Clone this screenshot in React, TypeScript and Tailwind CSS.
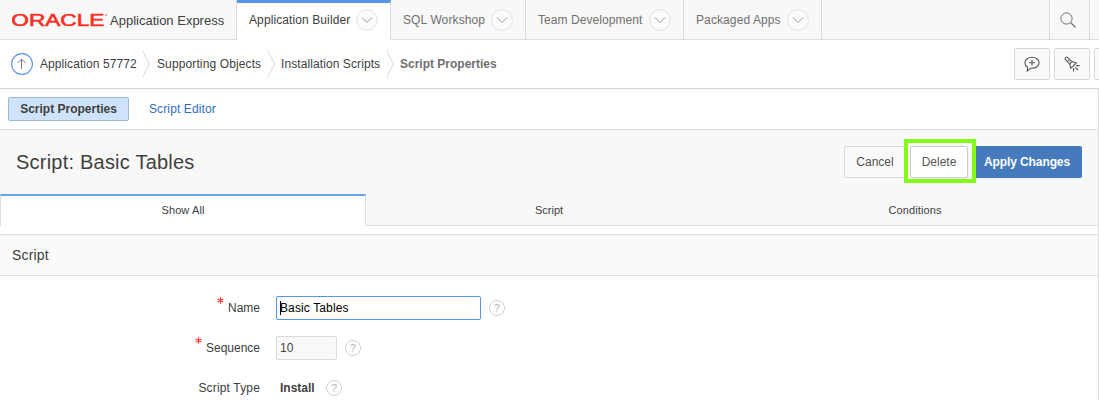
import type { ReactNode } from "react";

function ChevronCircle() {
  return (
    <svg width="22" height="22" viewBox="0 0 22 22" fill="none" className="shrink-0">
      <circle cx="11" cy="11" r="10.4" stroke="#e2e2e2" fill="#fbfbfb" />
      <path d="M6 8.5 L11 13.5 L16 8.5" stroke="#9a9a9a" />
    </svg>
  );
}

function NavTab({ label, width, active, spacing }: { label: string; width: string; active?: boolean; spacing: string }) {
  return (
    <div
      className={`${width} flex h-10 shrink-0 items-center justify-between border-r border-[#dcdcdc] pr-3 pl-3 ${
        active ? "border-t-[3px] border-t-[#5796e6] bg-white pb-[3px] text-[#404040]" : "border-b bg-[#f8f8f8] text-[#707070]"
      }`}
    >
      <span className={`whitespace-nowrap ${spacing}`}>{label}</span>
      <ChevronCircle />
    </div>
  );
}

function CrumbSeparator({ className }: { className: string }) {
  return (
    <svg width="9" height="26" viewBox="0 0 9 26" fill="none" className={`shrink-0 ${className}`}>
      <path d="M1 0.5 L7.5 13 L1 25.5" stroke="#d8d8d8" />
    </svg>
  );
}

function Help({ className }: { className: string }) {
  return (
    <span className={`flex size-4 items-center justify-center rounded-full border border-[#cfcfcf] text-[11px] leading-none text-[#b8b8b8] ${className}`}>
      ?
    </span>
  );
}

function IconButton({ children }: { children: ReactNode }) {
  return (
    <button className="flex h-8 w-9 shrink-0 items-center justify-center rounded-[2px] border border-[#d8d8d8] bg-[#f9f9f9]">
      {children}
    </button>
  );
}

function Label({ text, required, spacing = "" }: { text: string; required?: boolean; spacing?: string }) {
  return (
    <div className="flex w-[260px] shrink-0 justify-end text-[#404040]">
      {required && (
        <svg width="7" height="7" viewBox="0 0 7 7" className="mr-1 -mt-[3px] shrink-0" stroke="#ff3b30" strokeWidth="1.2">
          <path d="M3.5 0.3V6.7M0.7 1.9L6.3 5.1M6.3 1.9L0.7 5.1" />
        </svg>
      )}
      <span className={`whitespace-nowrap ${spacing}`}>{text}</span>
    </div>
  );
}

export default function App() {
  return (
    <div className="h-[400px] w-[1099px] overflow-hidden bg-white font-['Liberation_Sans',Arial,sans-serif] text-[12px] leading-4 text-[#404040]">
      <header className="flex h-10">
        <div className="flex h-10 w-[237px] shrink-0 items-center border-r border-b border-[#dcdcdc] bg-[#f8f8f8] pl-3">
          <svg width="96" height="16" viewBox="0 0 96 16" className="shrink-0">
            <text x="-0.7" y="14" fontSize="16.5" fill="#f8301f" stroke="#f8301f" strokeWidth="0.6" textLength="93" lengthAdjust="spacingAndGlyphs">
              ORACLE
            </text>
            <circle cx="94.2" cy="3" r="0.8" fill="#f8301f" />
          </svg>
          <span className="ml-0.5 pt-0.5 text-[13px] whitespace-nowrap">Application Express</span>
        </div>
        <NavTab label="Application Builder" width="w-[154px]" active spacing="tracking-[0.1px]" />
        <NavTab label="SQL Workshop" width="w-[135px]" spacing="tracking-[0.12px]" />
        <NavTab label="Team Development" width="w-[158px]" spacing="tracking-[0.06px]" />
        <NavTab label="Packaged Apps" width="w-[138px]" spacing="tracking-[0.1px]" />
        <div className="grow border-b border-[#dcdcdc] bg-[#f8f8f8]" />
        <div className="flex w-[41px] items-center justify-center border-x border-b border-[#dcdcdc] bg-[#f8f8f8] pr-1">
          <svg width="16" height="16" viewBox="0 0 16 16" fill="none" stroke="#707070">
            <circle cx="6.5" cy="6.5" r="5.6" />
            <path d="M10.6 10.6L15.4 15.2" strokeWidth="1.3" />
          </svg>
        </div>
        <div className="w-[9px] border-b border-[#dcdcdc] bg-[#f8f8f8]" />
      </header>

      <div className="flex h-[49px] items-center border-b border-[#d4d4d4]">
        <svg width="22" height="22" viewBox="0 0 22 22" fill="none" className="ml-[11px] shrink-0">
          <circle cx="11" cy="11" r="10.4" stroke="#5796e6" strokeWidth="1.1" />
          <path d="M10.5 16V6M6.5 10L10.5 6L14.5 10" stroke="#777777" />
        </svg>
        <nav className="flex items-center whitespace-nowrap">
          <span className="ml-[7px] w-[97px] tracking-[0.08px]">Application 57772</span>
          <CrumbSeparator className="ml-[5px]" />
          <span className="ml-[6px] w-[105px] tracking-[0.12px]">Supporting Objects</span>
          <CrumbSeparator className="ml-[5px]" />
          <span className="ml-[5px] w-[100px] tracking-[0.09px]">Installation Scripts</span>
          <CrumbSeparator className="ml-[5px]" />
          <span className="ml-[5px] font-bold text-[#707070]">Script Properties</span>
        </nav>
        <div className="grow" />
        <div className="flex w-[85px] gap-1 overflow-hidden">
          <IconButton>
            <svg width="16" height="16" viewBox="0 0 16 16" fill="none" stroke="#555555" strokeWidth="1.1">
              <path d="M3.4 11.3C1.8 10.2 0.9 8.6 0.9 6.8C0.9 3.6 4 1.2 8 1.2S15.1 3.6 15.1 6.8S12 12.3 8 12.3C7.4 12.3 6.9 12.3 6.4 12.2C5.5 13.6 4.4 14.5 3.2 15C3.6 13.8 3.7 12.5 3.4 11.3Z" />
              <path d="M8 4V9.6M5.2 6.8H10.8" />
            </svg>
          </IconButton>
          <IconButton>
            <svg width="16" height="16" viewBox="0 0 16 16" fill="none" stroke="#555555" strokeWidth="1.1">
              <path d="M1.2 3.1C0.6 2.3 2.3 0.6 3.1 1.2L8 5.6L12.3 6.9L6.9 12.3L5.6 8Z" />
              <path d="M8 5.6L5.6 8M3.9 3.9L5.4 5.2" />
              <path d="M12 9.6H15.6M11.3 11.3L14.2 14.2M9.6 12.2V15.4" />
            </svg>
          </IconButton>
          <IconButton>{null}</IconButton>
        </div>
      </div>

      <main className="h-[311px] border-r border-[#dcdcdc]">
        <div className="flex h-[41px] items-center border-b border-[#e0e0e0] bg-linear-to-b from-[#f7f7f7] to-white to-10% pl-2">
          <button className="h-6 w-[121px] rounded-[2px] border border-[#9fb8d3] bg-[#cfe4fa] font-bold whitespace-nowrap">
            Script Properties
          </button>
          <a className="ml-5 tracking-[0.12px] whitespace-nowrap text-[#2d6fbd]">Script Editor</a>
        </div>

        <div className="flex h-16 items-center bg-[#f8f8f8] pr-4 pl-4">
          <h1 className="grow text-[20px] leading-6 tracking-[0.22px]">Script: Basic Tables</h1>
          <div className="relative flex">
            <button className="h-8 w-[62px] rounded-l-[2px] border border-[#d8d8d8] bg-[#f9f9f9] text-[#505050]">Cancel</button>
            <div className="w-1" />
            <button className="h-8 w-[58px] rounded-[2px] border border-[#cccccc] bg-white text-[#555555] shadow-xs">Delete</button>
            <div className="w-2" />
            <button className="h-8 w-[106px] rounded-r-[2px] bg-[#457abc] pr-1 font-bold tracking-[-0.1px] whitespace-nowrap text-white shadow-xs">
              Apply Changes
            </button>
            <div className="absolute -top-[7px] left-[60px] h-[44px] w-[72px] border-4 border-[#82fc14]" />
          </div>
        </div>

        <div className="flex h-8 bg-[#f8f8f8] text-center text-[11px]">
          <div className="w-[366px] border-x border-t-2 border-x-[#dcdcdc] border-t-[#66a4e6] bg-white pt-[6px] tracking-[0.1px]">Show All</div>
          <div className="w-[366px] border-b border-[#dcdcdc] pt-2">Script</div>
          <div className="w-[366px] border-b border-[#dcdcdc] pt-2 tracking-[0.1px]">Conditions</div>
        </div>

        <h2 className="mt-2 flex h-[42px] items-center border-y border-[#dfdfdf] bg-[#fafafa] pl-3 text-[14px] tracking-[0.15px]">Script</h2>

        <form className="pt-5">
          <div className="flex h-6 items-center">
            <Label text="Name" required />
            <div className="ml-4 flex h-6 w-[205px] items-center rounded-[2px] border border-[#5796e6] bg-white pl-[3px] tracking-[0.12px] text-black">
              <span className="-mr-px h-[14px] w-px bg-black" />
              Basic Tables
            </div>
            <Help className="ml-2" />
          </div>
          <div className="mt-4 flex h-6 items-center">
            <Label text="Sequence" required />
            <div className="ml-4 flex h-6 w-[61px] items-center rounded-[2px] border border-[#dcdcdc] bg-[#f9f9f9] pl-[3px]">10</div>
            <Help className="ml-2" />
          </div>
          <div className="mt-4 flex h-6 items-center">
            <Label text="Script Type" spacing="tracking-[0.16px]" />
            <span className="ml-5 w-[35px] font-bold">Install</span>
            <Help className="ml-[11px]" />
          </div>
        </form>
      </main>
    </div>
  );
}
